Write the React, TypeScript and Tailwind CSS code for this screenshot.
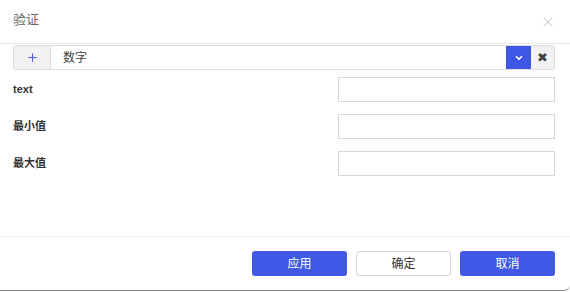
import { ChevronDown, Plus, X } from "lucide-react"

const font = { fontFamily: '"Liberation Sans", "Noto Sans CJK SC", sans-serif' }

const fields = ["text", "最小值", "最大值"]

export default function App() {
  return (
    <div className="w-[570px] h-[292px] bg-white" style={font}>
      <div className="flex flex-col h-[291px] border-b border-[#8a8a8a] rounded-br-[6px] overflow-hidden">
        {/* 标题 */}
        <div className="h-[44px] shrink-0 flex items-center justify-between pl-[13px] pr-[14px] border-b border-[#e8e8e8]">
          <span className="text-[13px] text-[#666] -mt-[3px]">验证</span>
          <X className="w-[16px] h-[16px] text-[#bbb]" strokeWidth={1.3} />
        </div>

        {/* 内容 */}
        <div className="flex-1 pl-[13px] pr-[15px] pt-[1px]">
          <div className="flex h-[25px] border border-[#ddd] rounded-[3px]">
            <div className="w-[37px] flex items-center justify-center bg-[#f2f2f2] border-r border-[#ddd]">
              <Plus className="w-[13px] h-[13px] text-[#4b5ce0]" strokeWidth={2} />
            </div>
            <div className="flex-1 flex items-center pl-[12px] text-[12px] text-[#444]">数字</div>
            <div className="w-[25px] flex items-center justify-center bg-[#3f57e4]">
              <ChevronDown className="w-[10px] h-[10px] text-white" strokeWidth={4} />
            </div>
            <div className="w-[23px] flex items-center justify-center bg-[#f2f2f2] text-[13px] text-[#444] rounded-r-[3px]">
              ✖
            </div>
          </div>

          <div className="flex flex-col gap-[12px] mt-[7px]">
            {fields.map((f) => (
              <div key={f} className="flex items-center justify-between h-[25px]">
                <span className="text-[11px] font-semibold text-[#333] -mt-[1px]">{f}</span>
                <input className="w-[217px] h-[25px] border border-[#d6d6d6] outline-none" />
              </div>
            ))}
          </div>
        </div>

        {/* 按钮 */}
        <div className="h-[54px] shrink-0 border-t border-[#ececec] flex justify-end gap-[9px] pr-[15px] pt-[14px]">
          <button className="w-[95px] h-[25px] rounded-[3px] bg-[#4158e6] text-white text-[12px]">应用</button>
          <button className="w-[95px] h-[25px] rounded-[3px] bg-white border border-[#d9d9d9] text-[#333] text-[12px]">确定</button>
          <button className="w-[95px] h-[25px] rounded-[3px] bg-[#4158e6] text-white text-[12px]">取消</button>
        </div>
      </div>
    </div>
  )
}
